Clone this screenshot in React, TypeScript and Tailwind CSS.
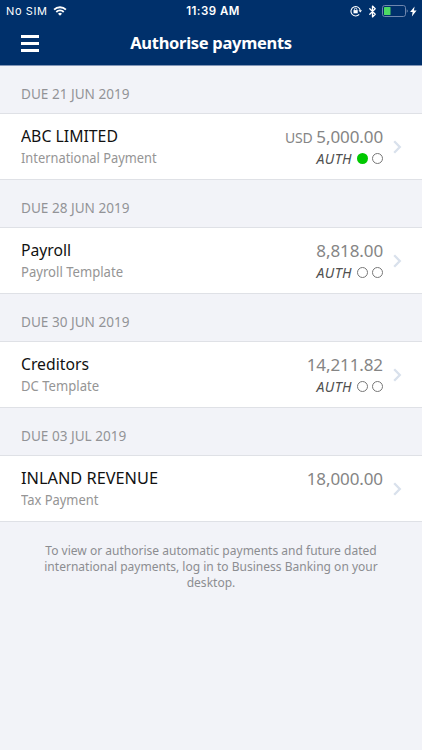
import { Bluetooth } from 'lucide-react';

type Payment = {
  due: string;
  name: string;
  nameClass: string;
  type: string;
  typeClass: string;
  currency?: string;
  amount: string;
  auth?: boolean[];
};

const payments: Payment[] = [
  {
    due: 'DUE 21 JUN 2019',
    name: 'ABC LIMITED',
    nameClass: 'scale-x-[0.93]',
    type: 'International Payment',
    typeClass: 'scale-x-[0.918]',
    currency: 'USD',
    amount: '5,000.00',
    auth: [true, false],
  },
  {
    due: 'DUE 28 JUN 2019',
    name: 'Payroll',
    nameClass: 'scale-x-[0.925]',
    type: 'Payroll Template',
    typeClass: 'scale-x-[0.935]',
    amount: '8,818.00',
    auth: [false, false],
  },
  {
    due: 'DUE 30 JUN 2019',
    name: 'Creditors',
    nameClass: 'scale-x-[0.925]',
    type: 'DC Template',
    typeClass: 'scale-x-[0.935]',
    amount: '14,211.82',
    auth: [false, false],
  },
  {
    due: 'DUE 03 JUL 2019',
    name: 'INLAND REVENUE',
    nameClass: 'scale-x-[0.96]',
    type: 'Tax Payment',
    typeClass: 'scale-x-[0.925]',
    amount: '18,000.00',
  },
];

function StatusBar() {
  return (
    <div className="grid h-[22px] grid-cols-[1fr_auto_1fr] items-center px-[6px] font-['Inter',sans-serif] text-[11px] leading-[22px] text-white">
      <div className="flex items-center gap-[5px]">
        <span className="tracking-[0.6px]">No SIM</span>
        <svg width="14" height="10" viewBox="0 0 15 11" fill="none" stroke="currentColor" strokeWidth="2">
          <path d="M1 4.1a9.2 9.2 0 0 1 13 0" />
          <path d="M3.4 6.6a5.8 5.8 0 0 1 8.2 0" />
          <path d="M7.5 10.8 5.3 8.5a3.1 3.1 0 0 1 4.4 0z" fill="currentColor" stroke="none" />
        </svg>
      </div>
      <span className="pl-[4px] text-[11.5px] font-semibold tracking-[0.45px]">11:39 AM</span>
      <div className="flex items-center justify-end">
        {/* rotation lock */}
        <svg className="mr-[4px]" width="12" height="12" viewBox="0 0 12 12" fill="none" stroke="currentColor">
          <path d="M9.2 9.4A4.7 4.7 0 1 1 10.3 5.4" strokeWidth="1.1" />
          <path d="M8.5 5.2h3.5l-1.7 2.4z" fill="currentColor" stroke="none" />
          <rect x="3.5" y="5.1" width="4.2" height="3.2" fill="currentColor" stroke="none" />
          <path d="M4.4 5.3V4.4a1.2 1.2 0 0 1 2.4 0v.9" strokeWidth=".9" />
        </svg>
        <Bluetooth className="mr-[3px]" size={13} strokeWidth={2.4} />
        <svg width="26" height="12" viewBox="0 0 26 12" fill="none">
          <rect x=".5" y=".5" width="23" height="11" rx="2.2" stroke="#6f87ae" />
          <rect x="2" y="2" width="6.5" height="8" rx=".6" fill="#4cd964" />
          <path d="M24.7 4.2v3.6q1.1-.6 1.1-1.8t-1.1-1.8z" fill="#6f87ae" />
        </svg>
        <svg className="-mr-[1px] ml-[2px]" width="7" height="11" viewBox="0 0 7 10" fill="currentColor">
          <path d="M4.6 0 .1 5.6h2.5L1.9 10l4.7-5.9H3.9z" />
        </svg>
      </div>
    </div>
  );
}

function Header() {
  return (
    <header className="h-[66px] border-b border-[#8296b7] bg-[#00306b]">
      <StatusBar />
      <div className="grid h-[43px] grid-cols-[1fr_auto_1fr] items-center px-[21px]">
        <button aria-label="Menu" className="flex w-[18px] flex-col gap-[4px]">
          <span className="h-[3px] bg-white" />
          <span className="h-[3px] bg-white" />
          <span className="h-[3px] bg-white" />
        </button>
        <h1 className="text-[16.5px] font-bold tracking-[-0.3px] text-white">Authorise payments</h1>
      </div>
    </header>
  );
}

function AuthDots({ auth }: { auth: boolean[] }) {
  return (
    <div className="flex h-5 items-center text-[#505050]">
      <span className="mr-[1px] text-[14px] tracking-[0.4px] italic">AUTH</span>
      {auth.map((done, i) => (
        <span
          key={i}
          className={
            done
              ? 'ml-[4px] size-[11px] rounded-full bg-[#00c800]'
              : 'ml-[4px] size-[11px] rounded-full border border-[#777]'
          }
        />
      ))}
    </div>
  );
}

function PaymentSection({ payment }: { payment: Payment }) {
  return (
    <section>
      <h2 className="h-[47px] pt-[18px] pl-[21px] text-[14px] leading-5 text-[#929397]">
        <span className="inline-block origin-left scale-x-[0.97]">{payment.due}</span>
      </h2>
      <div className="flex h-[67px] border-y border-[#dfe1e6] bg-white pl-[21px]">
        <div className="flex-1 pt-[10px]">
          <div className="h-6 text-[17px] leading-6 text-[#111]">
            <span className={`inline-block origin-left ${payment.nameClass}`}>{payment.name}</span>
          </div>
          <div className="h-5 text-[14px] leading-5 text-[#959595]">
            <span className={`inline-block origin-left ${payment.typeClass}`}>{payment.type}</span>
          </div>
        </div>
        <div className="flex w-[110px] flex-col items-end pt-[11px]">
          <div className="flex h-[23px] items-baseline gap-1 leading-6 text-[#858585]">
            {payment.currency && <span className="text-[14px] tracking-[-0.3px]">{payment.currency}</span>}
            <span className="text-[17px] tracking-[-0.1px]">{payment.amount}</span>
          </div>
          {payment.auth && <AuthDots auth={payment.auth} />}
        </div>
        <div className="flex w-[39px] items-center pl-[10px]">
          <svg width="9" height="14" viewBox="0 0 9 14" fill="none" className="text-[#d9e1ec]">
            <path d="m1.2 1.2 5.6 5.8-5.6 5.8" stroke="currentColor" strokeWidth="2.3" />
          </svg>
        </div>
      </div>
    </section>
  );
}

export default function App() {
  return (
    <div className="h-[750px] w-[422px] overflow-hidden bg-[#f2f3f8] font-['Noto_Sans',sans-serif]">
      <Header />
      <main>
        {payments.map((payment) => (
          <PaymentSection key={payment.due} payment={payment} />
        ))}
        <p className="mt-[20px] scale-x-[0.925] text-center text-[13px] leading-4 text-[#8c8d91]">
          To view or authorise automatic payments and future dated
          <br />
          international payments, log in to Business Banking on your
          <br />
          desktop.
        </p>
      </main>
    </div>
  );
}
